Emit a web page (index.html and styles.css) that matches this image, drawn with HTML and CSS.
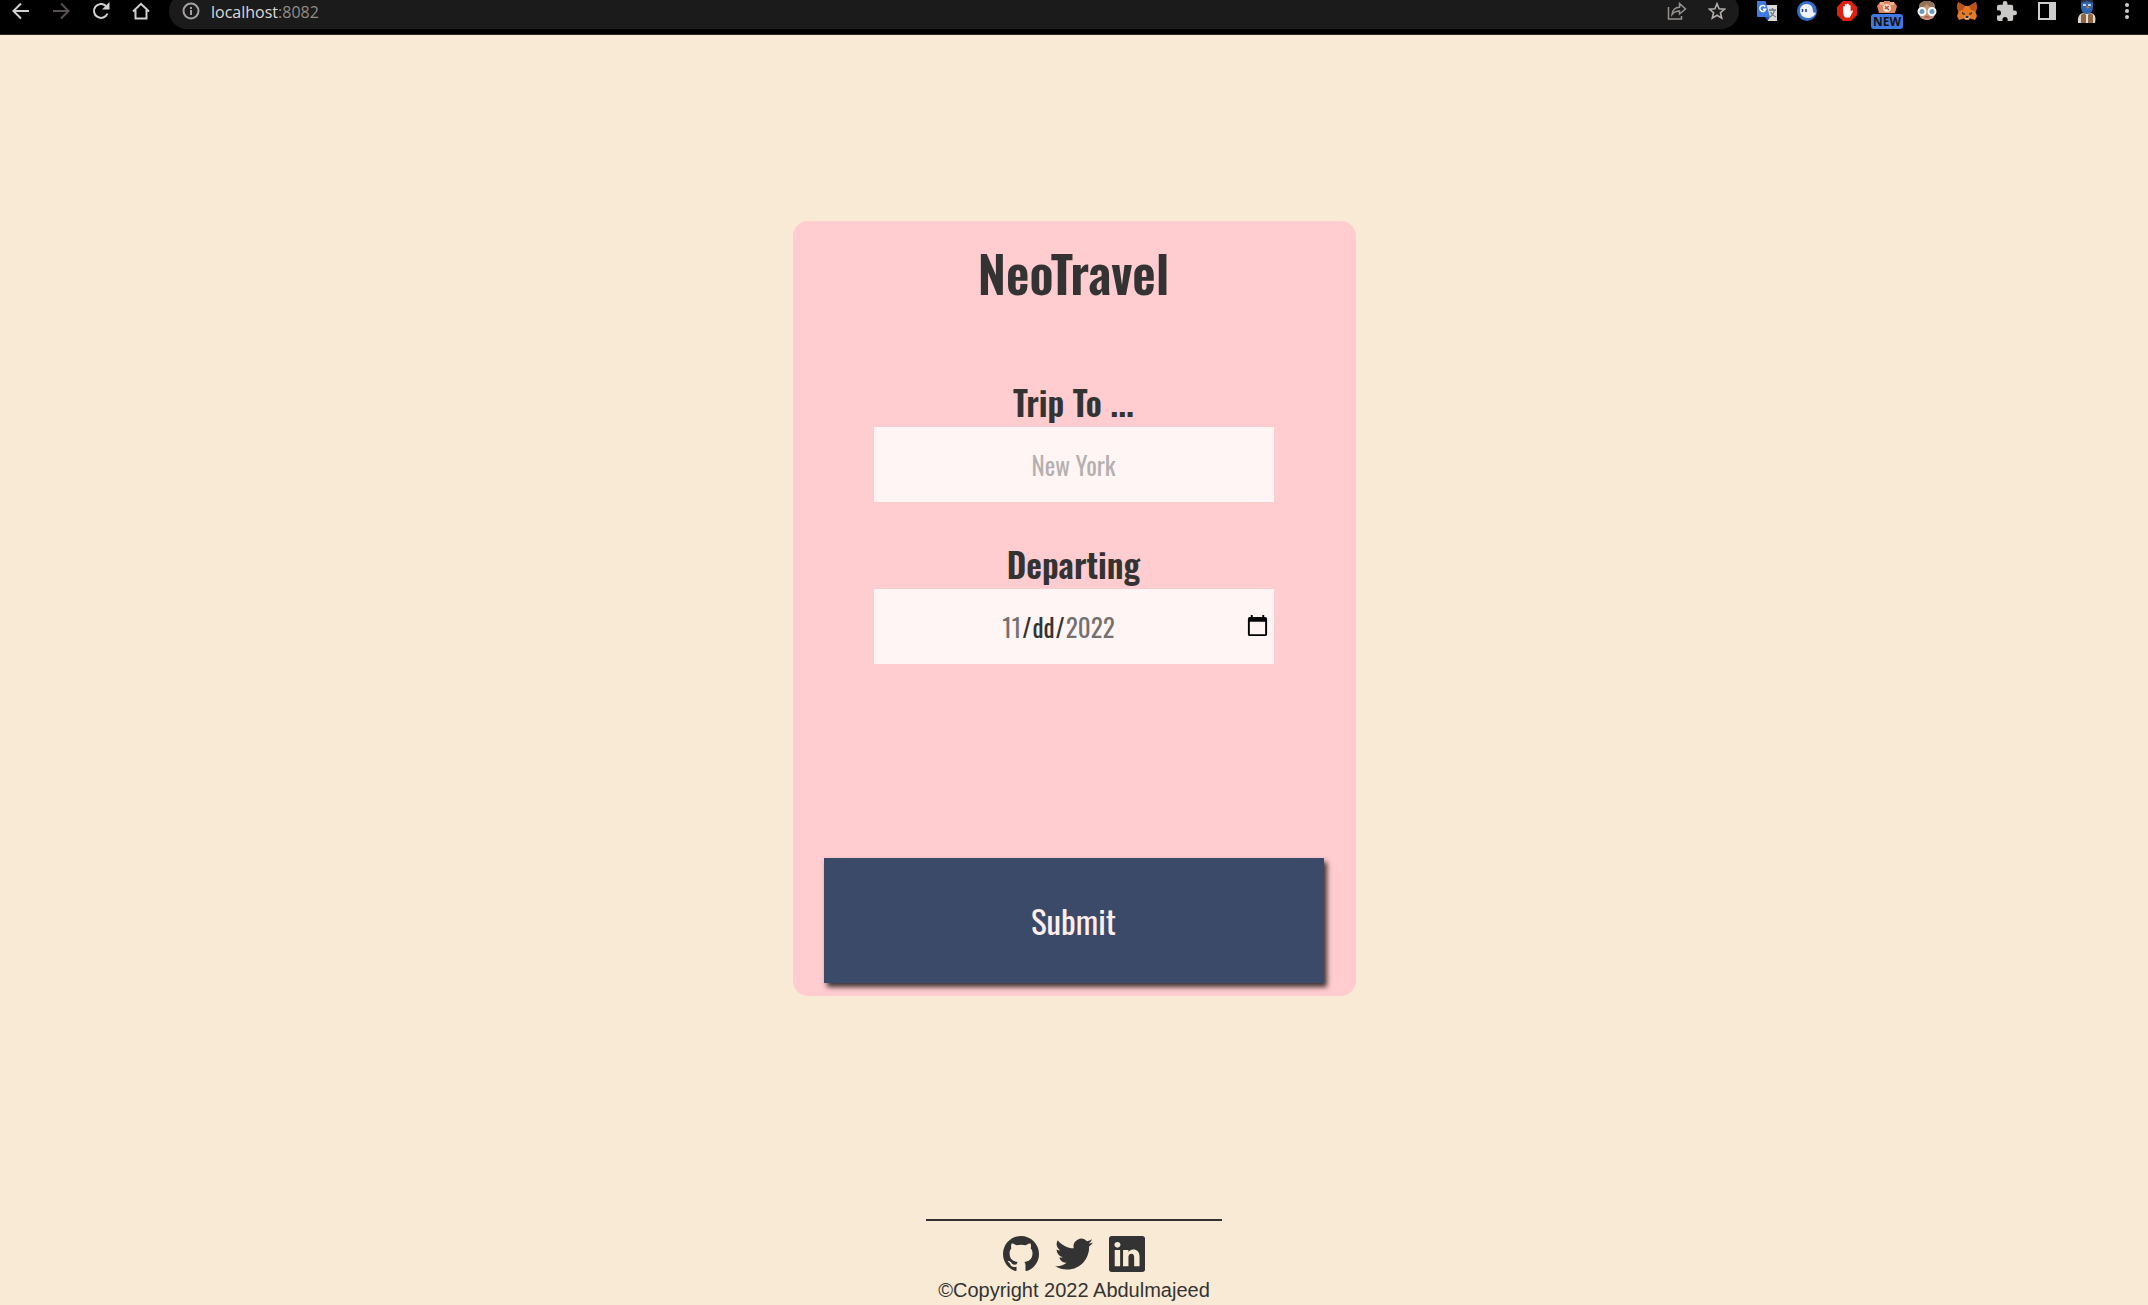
FILE: index.html
```html
<!DOCTYPE html>
<html lang="en">
<head>
<meta charset="utf-8">
<meta name="viewport" content="width=device-width, initial-scale=1">
<title>NeoTravel</title>
<link rel="stylesheet" href="styles.css">
</head>
<body>
<header class="toolbar">
  <nav class="tools" aria-label="Navigation">
    <button class="tool" aria-label="Back"><svg width="18" height="18" viewBox="0 0 18 18" fill="none" stroke="#d4d2d0" stroke-width="2"><path d="M17 9H2M9 1.500L1.500 9L9 16.500"/></svg></button>
    <button class="tool" aria-label="Forward"><svg width="18" height="18" viewBox="0 0 18 18" fill="none" stroke="#565150" stroke-width="2"><path d="M1 9H16M9 1.500L16.500 9L9 16.500"/></svg></button>
    <button class="tool" aria-label="Reload"><svg width="18" height="18" viewBox="0 0 18 18" fill="none" stroke="#d4d2d0" stroke-width="2"><path d="M15.500 11.500A7 7 0 1 1 14 4"/><path d="M17.500 0V7.500H10Z" fill="#d4d2d0" stroke="none"/></svg></button>
    <button class="tool" aria-label="Home"><svg width="18" height="18" viewBox="0 0 18 18" fill="none" stroke="#d4d2d0" stroke-width="2"><path d="M1 9.500L9 1.800L17 9.500M3.500 8V16.500H14.500V8"/></svg></button>
  </nav>
  <div class="address">
    <button class="tool" aria-label="Site information"><svg width="18" height="18" viewBox="0 0 18 18" fill="none" stroke="#a5a1a0" stroke-width="2"><circle cx="9" cy="9" r="7.500"/><path d="M9 8V13M9 5V7"/></svg></button>
    <p class="url">localhost<span class="port">:8082</span></p>
    <button class="tool" aria-label="Share"><svg width="20" height="18" viewBox="0 0 20 18" fill="none" stroke="#96908f" stroke-width="1.500"><path d="M1.500 5V17H14.500V14"/><path d="M5 12.500C5.500 8 8 5.500 12.500 5.300V1.500L18.500 7L12.500 12V9C9 9 7 10 5 12.500Z"/></svg></button>
    <button class="tool" aria-label="Bookmark"><svg width="18" height="18" viewBox="0 0 18 18" fill="none" stroke="#b5b0ae" stroke-width="1.600"><path d="M9 1.700L11.100 6.700L16.600 7.100L12.400 10.700L13.700 16.100L9 13.200L4.300 16.100L5.600 10.700L1.400 7.100L6.900 6.700Z"/></svg></button>
  </div>
  <nav class="tools" aria-label="Extensions">
    <button class="tool" aria-label="Translate"><svg width="20" height="20" viewBox="0 0 20 20"><path d="M9 4H20V20H11Z" fill="#ddd9d5"/><path d="M12 9H19M15.500 7V9M13 16C15.500 14.500 17 12 17.300 9M13.500 11C14.500 13 16.500 15 19 16" fill="none" stroke="#667887" stroke-width="1.300"/><path d="M0 0H8.500L13 16H1Q0 16 0 15Z" fill="#4179e2"/><path d="M8 16H13L10.500 20Z" fill="#2750af"/><path d="M8.300 5.700A3 3 0 1 0 8.700 8.300H6" fill="none" stroke="#fff" stroke-width="1.500"/></svg></button>
    <button class="tool" aria-label="Ghostery"><svg width="20" height="20" viewBox="0 0 20 20"><circle cx="10" cy="10" r="10" fill="#346fca"/><path d="M3 9.500C3 5.500 6 3 9.500 3C14 3 16 6 16 10C16 12 17.500 12 19 11.500C17.500 15.500 14 17 11 17C6 17 3 14 3 9.500Z" fill="#eef2f7"/><path d="M5.500 8V11M9 8V11" stroke="#244a88" stroke-width="1.600"/></svg></button>
    <button class="tool" aria-label="Ad blocker"><svg width="20" height="20" viewBox="0 0 20 20"><path d="M6 0H14L20 6V14L14 20H6L0 14V6Z" fill="#df2114"/><path d="M6.200 12V5.500Q7 4.500 8 5.500V9V3.500Q9 2.500 9.900 3.500V9V2.700Q10.800 2 11.800 3V9V4.500Q12.800 3.500 13.600 4.700V10.500L15.300 9.300Q16.300 9.500 15.700 10.800L12.700 16.500H8.200Q6.500 15 6.200 12Z" fill="#fff"/></svg></button>
    <button class="tool" aria-label="Brick extension, new"><svg width="20" height="20" viewBox="0 0 20 20"><path d="M0 5L3 1H7V0H13V1H17L20 5L18 12H2Z" fill="#dc855f"/><path d="M3 1H7V4H3ZM13 1H17V4H13Z" fill="#f2b18e"/><circle cx="10" cy="7" r="4" fill="#f6e1d4"/><path d="M8 8L12 5M8 5L12 9" stroke="#b75235" stroke-width="1.500"/></svg><span class="badge">NEW</span></button>
    <button class="tool" aria-label="Glasses extension"><svg width="20" height="20" viewBox="0 0 20 20"><path d="M2 7C2 2 5 0 10 0S18 2 18 7V12C18 17 14 19 10 19S2 17 2 12Z" fill="#cc9274"/><path d="M2 7C2 2 5 0 10 0S18 2 18 7Q12 6 10 3Q7 7 2 7Z" fill="#94735b"/><circle cx="5" cy="10.500" r="3.500" fill="#6a9cbd" stroke="#fff" stroke-width="2"/><circle cx="15" cy="10.500" r="3.500" fill="#6a9cbd" stroke="#fff" stroke-width="2"/><path d="M7.500 16H12.500" stroke="#8b4f42"/></svg></button>
    <button class="tool" aria-label="Wallet"><svg width="20" height="20" viewBox="0 0 20 20"><path d="M1 1L8 5H12L19 1L20 7L18.500 11L20 15L18 19L13 17.500L11.500 19H8.500L7 17.500L2 19L0 15L1.500 11L0 7Z" fill="#e77824"/><path d="M1 1L8 5L6 9L1.500 10L0 7ZM19 1L12 5L14 9L18.500 10L20 7Z" fill="#b9541c"/><path d="M5 11L8 12.500L7.500 14L5 13ZM15 11L12 12.500L12.500 14L15 13Z" fill="#2b3c4b"/><path d="M7 16L8 15H12L13 16L11.500 18H8.500Z" fill="#d9c4b2"/><path d="M8.500 15H11.500V17H8.500Z" fill="#252d35"/></svg></button>
    <button class="tool" aria-label="Extensions"><svg width="20" height="20" viewBox="2 1 21 21" fill="#cac8c6"><path d="M20.500 11H19V7a2 2 0 0 0-2-2h-4V3.500a2.500 2.500 0 0 0-5 0V5H4a2 2 0 0 0-2 2v3.800h1.500a2.700 2.700 0 0 1 0 5.400H2V20a2 2 0 0 0 2 2h3.800v-1.500a2.700 2.700 0 0 1 5.400 0V22H17a2 2 0 0 0 2-2v-4h1.500a2.500 2.500 0 0 0 0-5z"/></svg></button>
    <button class="tool" aria-label="Side panel"><svg width="18" height="18" viewBox="0 0 18 18"><path d="M0 0H18V18H0ZM2 2V16H11V2Z" fill="#cfcdcb" fill-rule="evenodd"/></svg></button>
    <button class="tool" aria-label="Profile"><svg width="20" height="26" viewBox="0 0 20 26"><path d="M1 25Q0 16 6 15H14Q20 16 18 25Z" fill="#ddd5cf"/><path d="M4 25V17L7 15L10 18L13 15L16 17V25Z" fill="#8e6844"/><path d="M9 17H11V25H9Z" fill="#e8e0d9"/><path d="M4 5Q4 0 10 0T16 5V10Q15 16 10 16T4 10Z" fill="#2c65b1"/><path d="M4 5Q4 0 10 0T16 5L10 3Z" fill="#2d3340"/><path d="M6 6H9V8H6ZM11 6H14V8H11Z" fill="#bed6e8"/><path d="M9 8L13 9L10 11Z" fill="#d87538"/></svg></button>
    <button class="tool" aria-label="Menu"><svg width="4" height="18" viewBox="0 0 4 18" fill="#cfcdcb"><circle cx="2" cy="3" r="2"/><circle cx="2" cy="9" r="2"/><circle cx="2" cy="15" r="2"/></svg></button>
  </nav>
</header>

<main class="page">
  <form class="card">
    <h1 class="title">NeoTravel</h1>
    <div class="fields">
      <div class="field">
        <label class="label" for="city">Trip To ...</label>
        <input class="input" id="city" type="text" placeholder="New York">
      </div>
      <div class="field">
        <label class="label" for="date">Departing</label>
        <div class="date">
          <input class="input" id="date" type="date">
          <div class="date-text" aria-hidden="true"><span>11</span><b>/</b><b>dd</b><b>/</b><span>2022</span></div>
        </div>
      </div>
    </div>
    <button class="submit" type="submit">Submit</button>
  </form>
</main>

<footer class="footer">
  <hr class="rule">
  <nav class="social" aria-label="Social links">
    <a href="#github" aria-label="GitHub"><svg width="36" height="36" viewBox="0 0 16 16" fill="#333"><path d="M8 0C3.580 0 0 3.580 0 8c0 3.540 2.290 6.530 5.470 7.590.4.070.55-.17.55-.38 0-.19-.010-.82-.010-1.490-2.010.37-2.530-.49-2.690-.94-.090-.23-.48-.94-.82-1.130-.28-.15-.68-.52-.010-.53.63-.010 1.080.58 1.230.82.72 1.210 1.870.87 2.330.66.070-.52.28-.87.51-1.070-1.780-.2-3.640-.89-3.640-3.950 0-.87.31-1.590.82-2.150-.080-.2-.36-1.020.080-2.120 0 0 .67-.21 2.200.82.64-.18 1.320-.27 2-.27s1.360.090 2 .27c1.530-1.040 2.200-.82 2.200-.82.44 1.100.16 1.920.080 2.120.51.56.82 1.270.82 2.150 0 3.070-1.870 3.750-3.650 3.950.29.25.54.73.54 1.480 0 1.070-.010 1.930-.010 2.200 0 .21.15.46.55.38A8.010 8.010 0 0 0 16 8c0-4.420-3.580-8-8-8z"/></svg></a>
    <a href="#twitter" aria-label="Twitter"><svg width="40" height="36" viewBox="0 0 24 22" fill="#333"><path d="M23.600 3.900c-.85.38-1.770.63-2.730.75.98-.59 1.730-1.520 2.090-2.630-.92.540-1.940.94-3.020 1.150a4.750 4.750 0 0 0-8.100 4.330C7.880 7.300 4.380 5.400 2.030 2.530a4.750 4.750 0 0 0 1.470 6.350 4.700 4.700 0 0 1-2.150-.6v.06a4.750 4.750 0 0 0 3.810 4.660c-.7.190-1.440.22-2.140.08a4.760 4.760 0 0 0 4.440 3.300A9.530 9.530 0 0 1 .420 18.350a13.450 13.450 0 0 0 7.280 2.140c8.740 0 13.520-7.240 13.520-13.520l-.02-.61c.93-.67 1.740-1.510 2.400-2.460z"/></svg></a>
    <a href="#linkedin" aria-label="LinkedIn"><svg width="36" height="36" viewBox="0 0 16 16" fill="#333"><path d="M0 1.146C0 .513.526 0 1.175 0h13.650C15.474 0 16 .513 16 1.146v13.708c0 .633-.526 1.146-1.175 1.146H1.175C.526 16 0 15.487 0 14.854V1.146zm4.943 12.248V6.169H2.542v7.225h2.401zm-1.200-8.212c.837 0 1.358-.554 1.358-1.248-.015-.709-.520-1.248-1.342-1.248-.822 0-1.359.540-1.359 1.248 0 .694.521 1.248 1.327 1.248h.016zm4.908 8.212V9.359c0-.216.016-.432.080-.586.173-.431.568-.878 1.232-.878.869 0 1.216.662 1.216 1.634v3.865h2.401V9.250c0-2.220-1.184-3.252-2.764-3.252-1.274 0-1.845.700-2.165 1.193v.025h-.016l.016-.025V6.169h-2.400c.030.678 0 7.225 0 7.225h2.400z"/></svg></a>
  </nav>
  <p class="copyright">©Copyright 2022 Abdulmajeed</p>
</footer>
</body>
</html>
```
FILE: styles.css
```css
* {
  box-sizing: border-box;
}

body {
  margin: 0;
  min-height: 100vh;
  display: flex;
  flex-direction: column;
  background: #f9ead5;
  color: #333;
  font-family: "Oswald", "Liberation Sans Narrow", "Arial Narrow", "Liberation Sans", sans-serif;
}

h1,
p {
  margin: 0;
}

button {
  border: 0;
  font-family: inherit;
}

/* Browser toolbar */
.toolbar {
  display: flex;
  align-items: flex-end;
  gap: 8px;
  height: 35px;
  padding: 0 1px 5px;
  overflow: hidden;
  background: #000;
  border-bottom: 1px solid #2b2827;
}

.tools {
  display: flex;
}

.tool {
  position: relative;
  display: flex;
  align-items: center;
  justify-content: center;
  width: 40px;
  height: 36px;
  padding: 0;
  background: none;
}

.badge {
  position: absolute;
  left: 4px;
  bottom: 0;
  width: 32px;
  border-radius: 3px;
  background: #4179e2;
  color: #111;
  font: bold 12px/15px "Open Sans", sans-serif;
}

.address {
  flex: 1;
  display: flex;
  align-items: center;
  height: 36px;
  padding: 0 2px;
  border-radius: 18px;
  background: #1c1b1b;
}

.url {
  flex: 1;
  padding-top: 2px;
  color: #dcdada;
  font: 16px/34px "Open Sans", sans-serif;
}

.port {
  color: #918b89;
}

/* Trip form */
.page {
  flex: 1;
  display: flex;
  align-items: center;
  justify-content: center;
}

.card {
  display: flex;
  flex-direction: column;
  align-items: center;
  width: 563px;
  max-width: 100%;
  min-height: 775px;
  padding: 15px 32px 13px 31px;
  border-radius: 15px;
  background: #ffcdd0;
}

.title {
  font-size: 51px;
  font-weight: 600;
  line-height: 72px;
}

.fields {
  flex: 1;
  display: flex;
  flex-direction: column;
  align-items: center;
  gap: 39px;
  width: 100%;
  padding-top: 70px;
}

.field {
  display: flex;
  flex-direction: column;
  width: 400px;
  max-width: 100%;
}

.label {
  padding-bottom: 1px;
  font-size: 34px;
  font-weight: 600;
  line-height: 48px;
  text-align: center;
}

.field + .field {
  margin-top: -1px;
}

.input {
  width: 100%;
  height: 75px;
  padding: 1px 2px;
  border: 0;
  border-radius: 0;
  background: #fff5f4;
  color: #333;
  font-family: inherit;
  font-size: 25px;
  text-align: center;
  vertical-align: top;
}

.input::placeholder {
  color: #b5b0af;
}

.date {
  position: relative;
}

.date .input::-webkit-datetime-edit {
  opacity: 0;
}

.date-text {
  position: absolute;
  inset: 0 30px 0 0;
  display: flex;
  align-items: center;
  justify-content: center;
  gap: 1px;
  color: #757070;
  font-size: 25px;
  pointer-events: none;
}

.date-text b {
  color: #333;
  font-weight: normal;
}

.submit {
  width: 100%;
  height: 125px;
  background: #3c4a6a;
  box-shadow: 3px 4px 5px rgba(0, 0, 0, 0.75);
  color: #ffeeec;
  font-size: 33px;
}

/* Footer */
.footer {
  display: flex;
  flex-direction: column;
  align-items: center;
  padding-top: 37px;
}

.rule {
  width: 296px;
  height: 2px;
  margin: 0 0 15px;
  border: 0;
  background: #333;
}

.social {
  display: flex;
  gap: 15px;
}

.social a,
.social svg {
  display: block;
}

.copyright {
  padding-top: 3px;
  font: 20px/30px "Liberation Sans", Arial, sans-serif;
}
```
